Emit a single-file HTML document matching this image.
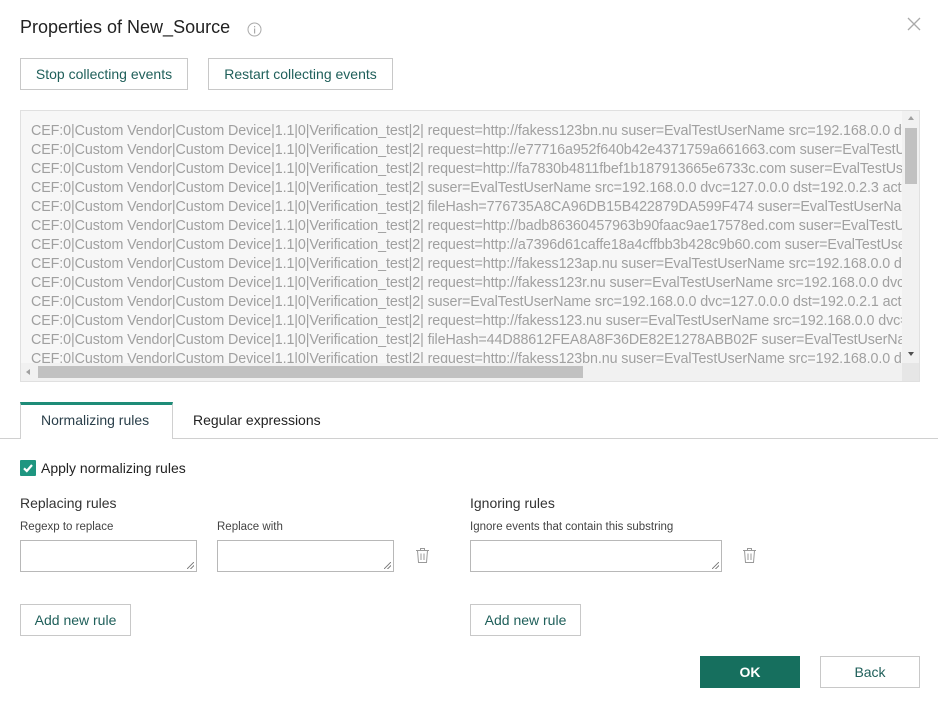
<!DOCTYPE html>
<html><head><meta charset="utf-8"><style>
*{box-sizing:border-box;margin:0;padding:0}
body{width:938px;height:708px;background:#fff;font-family:"Liberation Sans",sans-serif;position:relative;overflow:hidden;color:#222}
.a{position:absolute}
.btn{position:absolute;border:1px solid #c8c8c8;background:#fff;color:#1f5f5a;font-size:14px;display:flex;align-items:center;justify-content:center;height:32px}
.log{position:absolute;left:20px;top:110px;width:900px;height:272px;border:1px solid #e0e0e0;background:#f7f7f7;overflow:hidden}
.log .t{position:absolute;left:10px;top:11px;font-size:14.3px;line-height:19px;color:#a0a0a0;white-space:nowrap;letter-spacing:-0.1px}
.ta{position:absolute;border:1px solid #b8b8b8;height:32px;background:#fff}
.ta:after{content:"";position:absolute;right:2px;bottom:2px;width:7px;height:7px;background:linear-gradient(135deg,transparent 45%,#888 45%,#888 55%,transparent 55%,transparent 70%,#888 70%,#888 80%,transparent 80%)}
.lbl{position:absolute;font-size:11.5px;color:#444}
.h{position:absolute;font-size:14px;color:#333}
</style></head><body>
<div class="a" style="left:20px;top:17px;font-size:18px;color:#222">Properties of New_Source</div>
<svg class="a" style="left:247px;top:22px" width="15" height="15"><circle cx="7.5" cy="7.5" r="6.5" fill="none" stroke="#aaa"/><rect x="7" y="6.5" width="1.2" height="5" fill="#aaa"/><rect x="7" y="4" width="1.2" height="1.3" fill="#aaa"/></svg>
<svg class="a" style="left:907px;top:17px" width="14" height="14"><path d="M1 1L13 13M13 1L1 13" stroke="#aaa" stroke-width="1.3"/></svg>
<div class="btn" style="left:20px;top:58px;width:168px">Stop collecting events</div>
<div class="btn" style="left:208px;top:58px;width:185px">Restart collecting events</div>
<div class="log"><div class="t">
CEF:0|Custom Vendor|Custom Device|1.1|0|Verification_test|2| request=http://fakess123bn.nu suser=EvalTestUserName src=192.168.0.0 dvc=127.0.0.0<br>
CEF:0|Custom Vendor|Custom Device|1.1|0|Verification_test|2| request=http://e77716a952f640b42e4371759a661663.com suser=EvalTestUserName<br>
CEF:0|Custom Vendor|Custom Device|1.1|0|Verification_test|2| request=http://fa7830b4811fbef1b187913665e6733c.com suser=EvalTestUserName<br>
CEF:0|Custom Vendor|Custom Device|1.1|0|Verification_test|2| suser=EvalTestUserName src=192.168.0.0 dvc=127.0.0.0 dst=192.0.2.3 act=Warn<br>
CEF:0|Custom Vendor|Custom Device|1.1|0|Verification_test|2| fileHash=776735A8CA96DB15B422879DA599F474 suser=EvalTestUserName src<br>
CEF:0|Custom Vendor|Custom Device|1.1|0|Verification_test|2| request=http://badb86360457963b90faac9ae17578ed.com suser=EvalTestUserName<br>
CEF:0|Custom Vendor|Custom Device|1.1|0|Verification_test|2| request=http://a7396d61caffe18a4cffbb3b428c9b60.com suser=EvalTestUserName<br>
CEF:0|Custom Vendor|Custom Device|1.1|0|Verification_test|2| request=http://fakess123ap.nu suser=EvalTestUserName src=192.168.0.0 dvc=127<br>
CEF:0|Custom Vendor|Custom Device|1.1|0|Verification_test|2| request=http://fakess123r.nu suser=EvalTestUserName src=192.168.0.0 dvc=127<br>
CEF:0|Custom Vendor|Custom Device|1.1|0|Verification_test|2| suser=EvalTestUserName src=192.168.0.0 dvc=127.0.0.0 dst=192.0.2.1 act=Warn<br>
CEF:0|Custom Vendor|Custom Device|1.1|0|Verification_test|2| request=http://fakess123.nu suser=EvalTestUserName src=192.168.0.0 dvc=127<br>
CEF:0|Custom Vendor|Custom Device|1.1|0|Verification_test|2| fileHash=44D88612FEA8A8F36DE82E1278ABB02F suser=EvalTestUserName src<br>
CEF:0|Custom Vendor|Custom Device|1.1|0|Verification_test|2| request=http://fakess123bn.nu suser=EvalTestUserName src=192.168.0.0 dvc=127
</div>
<div class="a" style="right:0;top:0;width:17px;height:253px;background:#f1f1f1"></div>
<div class="a" style="right:2px;top:17px;width:12px;height:56px;background:#c1c1c1"></div>
<div class="a" style="right:5px;top:5px;width:0;height:0;border:3px solid transparent;border-bottom:4px solid #a0a0a0;border-top:0"></div>
<div class="a" style="right:5px;top:241px;width:0;height:0;border:3px solid transparent;border-top:4px solid #505050;border-bottom:0"></div>
<div class="a" style="left:0;bottom:0;width:898px;height:18px;background:#f1f1f1"></div>
<div class="a" style="left:17px;bottom:3px;width:545px;height:12px;background:#c1c1c1"></div>
<div class="a" style="left:5px;bottom:6px;border:3px solid transparent;border-right:4px solid #a0a0a0;border-left:0"></div>
<div class="a" style="left:888px;bottom:6px;border:3px solid transparent;border-left:4px solid #505050;border-right:0"></div>
<div class="a" style="right:0;bottom:0;width:17px;height:18px;background:#e6e6e6"></div>
</div>
<div class="a" style="left:0;top:438px;width:938px;height:1px;background:#d0d0d0"></div>
<div class="a" style="left:20px;top:402px;width:153px;height:37px;background:#fff;border:1px solid #d0d0d0;border-bottom:none;border-top:3px solid #1e8c78"></div>
<div class="a" style="left:41px;top:412px;font-size:14px;color:#2a3f4a">Normalizing rules</div>
<div class="a" style="left:193px;top:412px;font-size:14px;color:#222">Regular expressions</div>
<div class="a" style="left:20px;top:460px;width:16px;height:16px;background:#1e9680;border-radius:1px"></div>
<svg class="a" style="left:20px;top:460px" width="16" height="16"><path d="M4 8.3L6.8 11L12 5" stroke="#fff" stroke-width="2.2" fill="none"/></svg>
<div class="a" style="left:41px;top:460px;font-size:14px;color:#222">Apply normalizing rules</div>
<div class="h" style="left:20px;top:495px">Replacing rules</div>
<div class="lbl" style="left:20px;top:521px">Regexp to replace</div>
<div class="lbl" style="left:217px;top:521px">Replace with</div>
<div class="ta" style="left:20px;top:540px;width:177px"></div>
<div class="ta" style="left:217px;top:540px;width:177px"></div>
<div class="h" style="left:470px;top:495px">Ignoring rules</div>
<div class="lbl" style="left:470px;top:521px">Ignore events that contain this substring</div>
<div class="ta" style="left:470px;top:540px;width:252px"></div>
<svg class="a" style="left:415px;top:547px" width="15" height="17"><g fill="none" stroke="#999" stroke-width="1"><path d="M1 3.5H14M5.5 3.5V1.5H9.5V3.5M2.5 3.5L3.5 15.5H11.5L12.5 3.5M6 6.5V13M9 6.5V13"/></g></svg>
<svg class="a" style="left:742px;top:547px" width="15" height="17"><g fill="none" stroke="#999" stroke-width="1"><path d="M1 3.5H14M5.5 3.5V1.5H9.5V3.5M2.5 3.5L3.5 15.5H11.5L12.5 3.5M6 6.5V13M9 6.5V13"/></g></svg>
<div class="btn" style="left:20px;top:604px;width:111px">Add new rule</div>
<div class="btn" style="left:470px;top:604px;width:111px">Add new rule</div>
<div class="btn" style="left:700px;top:656px;width:100px;background:#166f5e;border-color:#166f5e;color:#fff;font-weight:bold">OK</div>
<div class="btn" style="left:820px;top:656px;width:100px">Back</div>
</body></html>
